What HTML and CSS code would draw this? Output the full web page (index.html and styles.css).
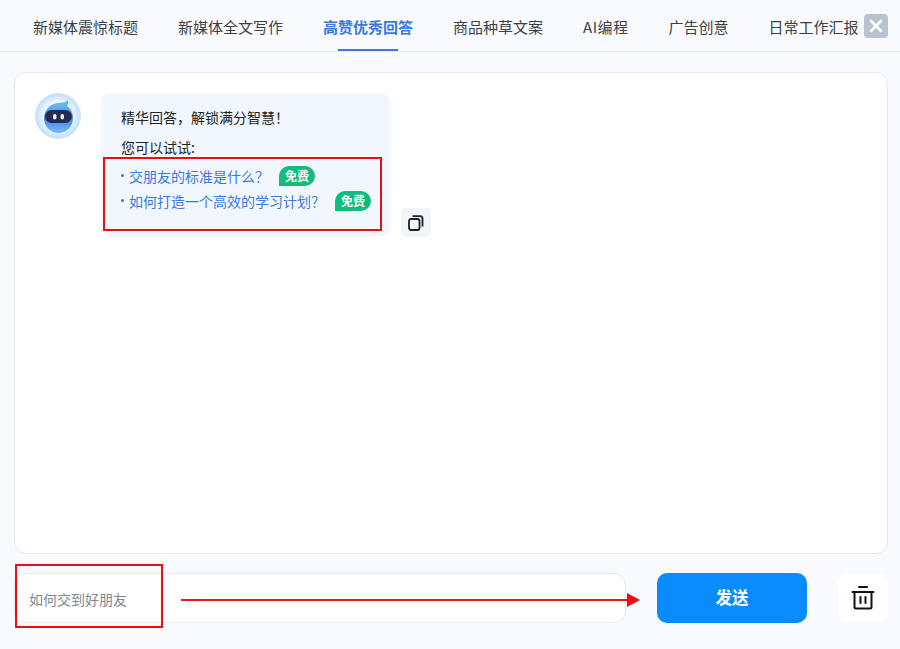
FILE: index.html
```html
<!DOCTYPE html>
<html lang="zh-CN">
<head>
<meta charset="utf-8">
<title>高赞优秀回答</title>
<link rel="stylesheet" href="styles.css">
</head>
<body>
<div class="app">
  <header class="topbar">
    <nav class="tabs">
      <a class="tab">新媒体震惊标题</a>
      <a class="tab">新媒体全文写作</a>
      <a class="tab active">高赞优秀回答</a>
      <a class="tab">商品种草文案</a>
      <a class="tab tab-latin">AI编程</a>
      <a class="tab">广告创意</a>
      <a class="tab">日常工作汇报</a>
    </nav>
    <button class="close" aria-label="关闭">
      <svg width="24" height="24" viewBox="0 0 24 24"><path d="M7 7l10 10M17 7L7 17" stroke="#fff" stroke-width="2.6" stroke-linecap="round" fill="none"/></svg>
    </button>
  </header>
  <main class="chat">
    <div class="message">
      <div class="avatar">
        <svg width="46" height="46" viewBox="0 0 46 46">
          <defs>
            <radialGradient id="bg" cx="50%" cy="50%" r="50%"><stop offset="0.6" stop-color="#f4f9ff"/><stop offset="1" stop-color="#bfdefa"/></radialGradient>
            <linearGradient id="head" x1="0" y1="0" x2="0" y2="1"><stop offset="0" stop-color="#6cc4fa"/><stop offset="0.6" stop-color="#3f8dec"/><stop offset="1" stop-color="#7db8f5"/></linearGradient>
          </defs>
          <circle cx="23" cy="23" r="22.5" fill="url(#bg)" stroke="#d5e5f5"/>
          <path d="M24 10c3.500 0 6.500-.8 9-3 .4 2.300 0 4.500-1 6 4 2.500 6 6.800 6 12 0 8.500-6.500 15-14.500 15S9 33.500 9 25c0-8.500 7-15 15-15z" fill="url(#head)"/>
          <rect x="10" y="17" width="27" height="13" rx="6.500" fill="#262b52"/>
          <rect x="18" y="21" width="3.500" height="5.500" rx="1.750" fill="#f2f7ff"/>
          <rect x="25.500" y="21" width="3.500" height="5.500" rx="1.750" fill="#f2f7ff"/>
        </svg>
      </div>
      <div class="bubble">
        <p class="line first">精华回答，解锁满分智慧！</p>
        <p class="line">您可以试试:</p>
        <ul class="suggestions">
          <li class="suggestion"><span class="link">交朋友的标准是什么？</span><span class="badge">免费</span></li>
          <li class="suggestion"><span class="link">如何打造一个高效的学习计划？</span><span class="badge">免费</span></li>
        </ul>
        <span class="mark mark-list"></span>
      </div>
      <button class="copy" aria-label="复制">
        <svg width="18" height="18" viewBox="0 0 18 18" fill="none" stroke="#1c1f26" stroke-width="1.800" stroke-linejoin="round"><rect x="2" y="5" width="10.500" height="11" rx="2"/><path d="M5.500 2.200h8a2 2 0 0 1 2 2v8.300"/></svg>
      </button>
    </div>
  </main>
  <footer class="composer">
    <div class="input">如何交到好朋友</div>
    <button class="send">发送</button>
    <button class="trash" aria-label="清空">
      <svg width="24" height="24" viewBox="0 0 24 24" fill="none" stroke="#111" stroke-width="2" stroke-linecap="round" stroke-linejoin="round"><path d="M1.500 6h21M8 1h8M3.500 6v15a1.500 1.500 0 0 0 1.500 1.500h14a1.500 1.500 0 0 0 1.500-1.500V6M9.500 11v6M14.500 11v6"/></svg>
    </button>
    <span class="mark mark-input"></span>
    <svg class="arrow" width="460" height="16" viewBox="0 0 460 16"><path d="M0 8H446" stroke="#e8181c" stroke-width="2"/><path d="M446 1l13 7-13 7z" fill="#f20a0a"/></svg>
  </footer>
</div>
</body>
</html>
```
FILE: styles.css
```css
* { box-sizing: border-box; }
html, body { margin: 0; height: 100%; }
body {
  background: #f8fafe;
  font-family: "Noto Sans CJK SC", "Liberation Sans", sans-serif;
  color: #333;
  overflow: hidden;
}
button { border: 0; padding: 0; font: inherit; cursor: pointer; }
.app { width: 900px; height: 649px; display: flex; flex-direction: column; }

.topbar {
  height: 52px;
  flex: none;
  border-bottom: 1px solid #e6e9ee;
  display: flex;
  padding: 0 12px 0 33px;
  position: relative;
}
.tabs { display: flex; gap: 40px; white-space: nowrap; }
.tab {
  position: relative;
  font-size: 15px;
  line-height: 53px;
  color: #3c3f45;
}
.tab-latin { letter-spacing: 0.5px; }
.tab.active { color: #3b78dc; font-weight: 700; }
.tab.active::after {
  content: "";
  position: absolute;
  left: 15px;
  right: 15px;
  bottom: 0;
  height: 2px;
  background: #3b78dc;
}
.close {
  position: absolute;
  left: 864px;
  top: 14px;
  width: 24px;
  height: 24px;
  border-radius: 4px;
  background: #b8c2d0;
  display: flex;
}

.chat {
  margin: 20px 12px 0 14px;
  height: 482px;
  flex: none;
  background: #fff;
  border: 1px solid #e6e9ef;
  border-radius: 12px;
  padding: 20px;
}
.message { display: flex; align-items: flex-end; }
.avatar { width: 46px; height: 46px; flex: none; align-self: flex-start; margin-right: 20px; }
.avatar svg { display: block; }
.bubble {
  position: relative;
  width: 289px;
  height: 144px;
  background: #f2f7fe;
  border-radius: 10px;
  padding: 13px 20px 0;
  font-size: 14px;
  color: #222;
}
.line { margin: 0; line-height: 22px; height: 22px; }
.line.first { margin-bottom: 8px; }
.suggestions { list-style: none; margin: 5px 0 0; padding: 0; }
.suggestion {
  display: flex;
  align-items: center;
  height: 25px;
  color: #3b78dc;
  padding-left: 8px;
  position: relative;
  white-space: nowrap;
}
.suggestion::before {
  content: "";
  position: absolute;
  left: 0;
  top: 11px;
  width: 3px;
  height: 3px;
  border-radius: 50%;
  background: #3b78dc;
}
.badge {
  flex: none;
  margin-left: 10px;
  width: 36px;
  height: 20px;
  border-radius: 10px 10px 10px 0;
  background: #10bd7c;
  color: #fff;
  font-size: 12px;
  font-weight: 700;
  line-height: 20px;
  text-align: center;
}
.copy {
  width: 30px;
  height: 29px;
  margin-left: 11px;
  border-radius: 5px;
  background: #f2f6fb;
  display: flex;
  align-items: center;
  justify-content: center;
}
.mark { position: absolute; border: 2px solid #ec0c16; pointer-events: none; }
.mark-list { left: 2px; top: 64px; width: 279px; height: 74px; }

.composer {
  position: relative;
  margin: 19px 12px 0 14px;
  display: flex;
  height: 50px;
  flex: none;
}
.input {
  width: 612px;
  background: #fff;
  border: 1px solid #e8eaef;
  border-radius: 12px;
  padding-left: 14px;
  font-size: 14px;
  line-height: 50px;
  color: #7f8794;
}
.send {
  width: 150px;
  margin-left: 31px;
  padding-bottom: 2px;
  background: #0a8cff;
  border-radius: 10px;
  color: #fff;
  font-size: 16.500px;
  font-weight: 700;
}
.trash {
  width: 50px;
  margin-left: 31px;
  background: #fff;
  border-radius: 10px;
  display: flex;
  align-items: center;
  justify-content: center;
}
.mark-input { left: 1px; top: -9px; width: 148px; height: 64px; }
.arrow { position: absolute; left: 167px; top: 19px; }
```
